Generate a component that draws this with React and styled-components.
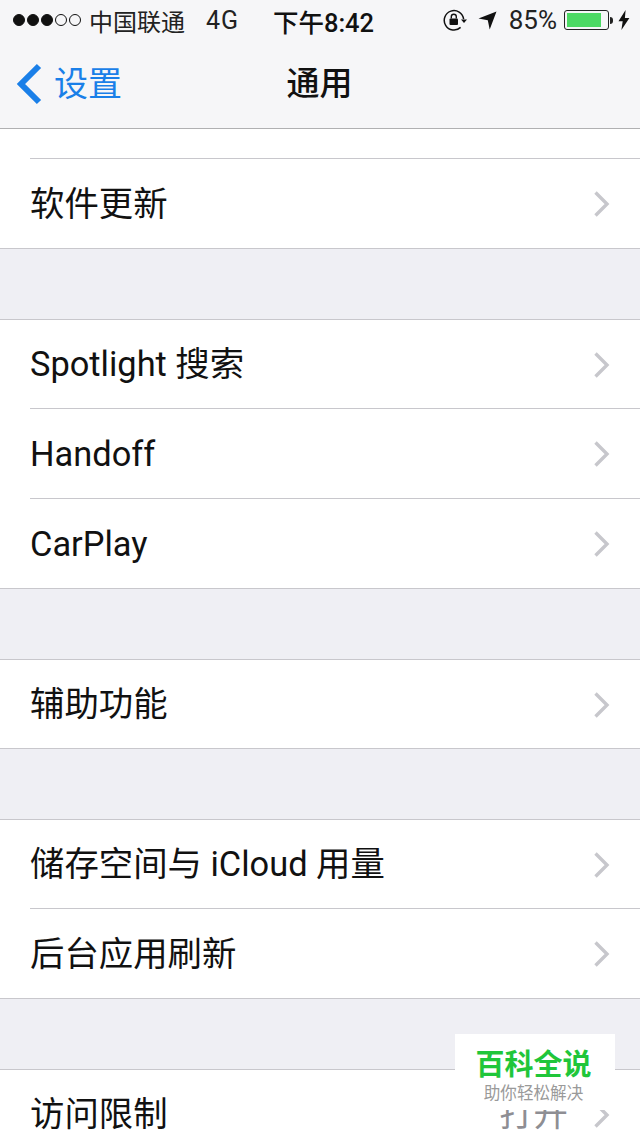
import React from "react";
import styled, { createGlobalStyle } from "styled-components";

const sections = [
  ["Spotlight 搜索", "Handoff", "CarPlay"],
  ["辅助功能"],
  ["储存空间与 iCloud 用量", "后台应用刷新"],
];

const App = () => {
  return (
    <Screen>
      <GlobalStyle />
      <NavArea>
        <StatusBar>
          <StatusLeft>
            <Signal>
              {[1, 1, 1, 0, 0].map((on, i) => (
                <Dot key={i} $on={on} />
              ))}
            </Signal>
            <Carrier>中国联通</Carrier>
            <Network>4G</Network>
          </StatusLeft>
          <Clock>下午8:42</Clock>
          <StatusRight>
            <svg width="24" height="22" viewBox="0 0 24 22">
              <path d="M20.6 10.2A9.7 9.7 0 1 0 17.6 18.4" fill="none" stroke="#111" strokeWidth="1.5" />
              <path d="M18 10.5h6l-3 3.4z" fill="#111" />
              <rect x="6.5" y="9.5" width="8.5" height="6.5" rx="1" fill="#111" />
              <path d="M8.3 9.5V7.7a2.5 2.5 0 0 1 5 0v1.8" fill="none" stroke="#111" strokeWidth="1.4" />
            </svg>
            <svg width="19" height="19" viewBox="0 0 19 19">
              <path d="M18.5 .5L11.7 18.5 9.8 9.2 .5 7.6z" fill="#111" />
            </svg>
            <Percent>85%</Percent>
            <Battery>
              <BatteryLevel />
            </Battery>
            <BatteryTip />
            <svg width="12" height="20" viewBox="0 0 12 20">
              <path d="M7.6 0L.5 11.2h4.2L3.4 20l8-12H6.9z" fill="#111" />
            </svg>
          </StatusRight>
        </StatusBar>
        <NavBar>
          <BackLink>
            <svg width="28" height="42" viewBox="0 0 28 42">
              <path d="M24 3L6 21l18 18" fill="none" stroke="#1a7fe8" strokeWidth="6" />
            </svg>
            <BackText>设置</BackText>
          </BackLink>
          <NavTitle>通用</NavTitle>
        </NavBar>
      </NavArea>

      <List>
        <ScrolledRow />
        <Row>
          <RowLabel>软件更新</RowLabel>
          <Chevron />
        </Row>
      </List>

      {sections.map((rows, i) => (
        <List key={i} $bordered>
          {rows.map((label) => (
            <Row key={label}>
              <RowLabel>{label}</RowLabel>
              <Chevron />
            </Row>
          ))}
        </List>
      ))}

      <List $bordered>
        <Row>
          <RowLabel>访问限制</RowLabel>
          <RowValue>打开</RowValue>
          <Chevron />
        </Row>
      </List>

      <Watermark>
        <WatermarkTitle>百科全说</WatermarkTitle>
        <WatermarkSub>助你轻松解决</WatermarkSub>
      </Watermark>
    </Screen>
  );
};
export default App;

const Chevron = () => (
  <ChevronIcon width="18" height="28" viewBox="0 0 18 28">
    <path d="M2.5 2.5L14 14 2.5 25.5" fill="none" stroke="#c7c7cc" strokeWidth="3.4" />
  </ChevronIcon>
);

const GlobalStyle = createGlobalStyle`
  html, body {
    margin: 0;
    padding: 0;
    background: #efeff4;
  }
  * {
    box-sizing: border-box;
  }
`;

const Screen = styled.div`
  background: #efeff4;
  color: #111;
  font-family: "Roboto", "Noto Sans CJK SC", sans-serif;
  height: 1136px;
  overflow: hidden;
  position: relative;
  width: 640px;
`;

const NavArea = styled.header`
  background: #f6f6f8;
  border-bottom: 1px solid #b0b0b2;
  height: 129px;
`;

const StatusBar = styled.div`
  align-items: center;
  display: grid;
  grid-template-columns: 1fr auto 1fr;
  height: 40px;
  padding: 0 10px 0 13px;
`;

const StatusLeft = styled.div`
  align-items: center;
  display: flex;
`;

const Signal = styled.div`
  display: flex;
  gap: 2px;
  margin-right: 8px;
`;

const Dot = styled.span`
  background: ${(p) => (p.$on ? "#111" : "transparent")};
  border: 1px solid #111;
  border-radius: 50%;
  height: 12px;
  width: 12px;
`;

const Carrier = styled.span`
  color: #222;
  font-size: 24px;
`;

const Network = styled.span`
  color: #222;
  font-size: 25px;
  letter-spacing: 1px;
  margin-left: 21px;
`;

const Clock = styled.span`
  font-size: 25.5px;
  font-weight: 500;
  margin-left: 4px;
`;

const StatusRight = styled.div`
  align-items: center;
  display: flex;
  justify-content: flex-end;

  svg:first-child {
    margin-right: 11px;
  }
`;

const Percent = styled.span`
  color: #222;
  font-size: 26px;
  margin: 0 7px 0 12px;
`;

const Battery = styled.div`
  border: 1px solid #222;
  border-radius: 3px;
  height: 20px;
  padding: 2px;
  width: 45px;
`;

const BatteryLevel = styled.div`
  background: #4cd964;
  height: 100%;
  width: 34px;
`;

const BatteryTip = styled.div`
  background: #222;
  border-radius: 0 3px 3px 0;
  height: 7px;
  margin: 0 5px 0 1px;
  width: 3px;
`;

const NavBar = styled.nav`
  align-items: center;
  display: flex;
  height: 88px;
  justify-content: center;
  position: relative;
`;

const BackLink = styled.div`
  align-items: center;
  display: flex;
  gap: 11px;
  left: 15px;
  position: absolute;
  top: 23px;
`;

const BackText = styled.span`
  color: #1a7fe8;
  font-size: 34px;
  line-height: 42px;
`;

const NavTitle = styled.h1`
  font-size: 33px;
  font-weight: 500;
  margin: 0;
  padding: 0 1px 6px 0;
`;

const List = styled.section`
  background: #fff;
  border-top: ${(p) => (p.$bordered ? "1px solid #c8c7cc" : "none")};
  margin-top: ${(p) => (p.$bordered ? "70px" : "0")};
`;

const ScrolledRow = styled.div`
  border-bottom: 1px solid #c8c7cc;
  height: 30px;
  margin-left: 30px;
`;

const Row = styled.div`
  align-items: center;
  display: flex;
  height: 90px;
  padding-left: 30px;
  padding-right: 29px;
  position: relative;

  &:first-child {
    height: 89px;
  }

  &::after {
    background: #c8c7cc;
    bottom: 0;
    content: "";
    height: 1px;
    left: 30px;
    position: absolute;
    right: 0;
  }

  &:last-child::after {
    left: 0;
  }
`;

const RowLabel = styled.span`
  color: #111;
  flex: 1;
  font-size: 34.4px;
  line-height: 40px;
  padding-bottom: 1px;
`;

const RowValue = styled.span`
  color: #8e8e93;
  font-size: 34.4px;
  line-height: 40px;
  margin-right: 25px;
  padding-bottom: 1px;
`;

const ChevronIcon = styled.svg`
  flex: none;
`;

const Watermark = styled.div`
  align-items: center;
  background: #fff;
  display: flex;
  flex-direction: column;
  height: 76px;
  left: 455px;
  padding: 14px 3px 0 0;
  position: absolute;
  top: 1034px;
  width: 160px;
`;

const WatermarkTitle = styled.div`
  color: #1fc63a;
  font-size: 29px;
  font-weight: 700;
  line-height: 34px;
`;

const WatermarkSub = styled.div`
  color: #9a9a9a;
  font-size: 16.6px;
  line-height: 20px;
  margin-top: 2px;
`;
